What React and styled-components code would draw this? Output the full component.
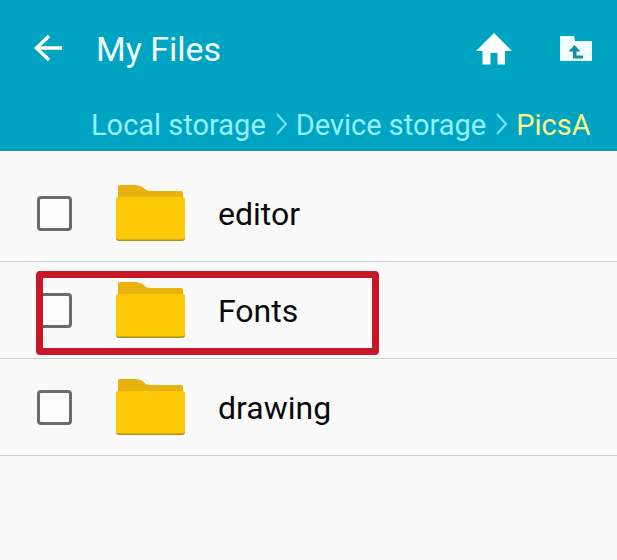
import React from "react";
import styled, { createGlobalStyle } from "styled-components";

const GlobalStyle = createGlobalStyle`
  *, *::before, *::after { box-sizing: border-box; }
  html, body { margin: 0; min-height: 100%; background: #fafafa; }
  body { font-family: Roboto, "Noto Sans", sans-serif; color: #0a0a0a; }
  svg { flex: none; }
`;

const Header = styled.header`
  background: #00a4c3;
  padding-bottom: 8px;
  border-bottom: 1px solid #0f9bb5;
`;

const Toolbar = styled.div`
  display: flex;
  align-items: center;
  height: 98px;
  padding: 0 24px 0 33px;
`;

const IconButton = styled.button`
  display: flex;
  flex: none;
  padding: 0;
  border: 0;
  background: none;
  color: ${(p) => p.$color || "#fbffff"};
  cursor: pointer;
`;

const Title = styled.h1`
  flex: 1;
  margin: 0 0 0 33px;
  font-size: 34px;
  line-height: 40px;
  font-weight: 400;
  color: #f4feff;
`;

const Actions = styled.div`
  display: flex;
  align-items: center;
  gap: 48px;
`;

const Breadcrumbs = styled.nav`
  display: flex;
  align-items: center;
  height: 44px;
  gap: 8px;
  margin: 0 27px 0 91px;
  padding-top: 10px;
  overflow: hidden;
  white-space: nowrap;
`;

const Crumb = styled.a`
  flex: none;
  font-size: 29px;
  line-height: 34px;
  color: ${(p) => (p.$current ? "#fbf58c" : "#94f0fb")};
  text-decoration: none;
`;

const FileList = styled.ul`
  margin: 0;
  padding: 14px 0 0;
  list-style: none;
`;

const FileRow = styled.li`
  position: relative;
  height: 97px;
  border-bottom: 1px solid #cfcfcf;
`;

const FileLabel = styled.label`
  display: flex;
  align-items: center;
  height: 100%;
  padding-left: 37px;
`;

const Checkbox = styled.input`
  appearance: none;
  flex: none;
  width: 35px;
  height: 35px;
  margin: 0 43px 0 0;
  border: 3px solid #6b6b6b;
  border-radius: 4px;
  background: #fcfcfc;
  &:checked { background: #00a4c3; }
`;

const FileName = styled.span`
  margin-left: 32px;
  padding-top: 2px;
  font-size: 32px;
  line-height: 38px;
`;

const Highlight = styled.div`
  position: absolute;
  top: 9px;
  left: 36px;
  width: 343px;
  height: 84px;
  border: 7px solid #c81828;
  border-radius: 4px;
  pointer-events: none;
`;

const BackIcon = () => (
  <svg width="30" height="30" viewBox="0 0 30 30" fill="none" stroke="currentColor" strokeWidth="3.500" aria-hidden="true">
    <path d="M29 14H4M16 2L3.500 14L16 26" />
  </svg>
);

const HomeIcon = () => (
  <svg width="36" height="32" viewBox="0 0 36 32" fill="currentColor" aria-hidden="true">
    <path d="M18 0L36 18H29V31.500H21.500V20H14.500V31.500H6.500V18H0Z" />
  </svg>
);

const FolderUpIcon = () => (
  <svg width="33" height="27" viewBox="0 0 33 27" aria-hidden="true">
    <path fill="currentColor" d="M0 0H14L15 5H32V25H0Z" />
    <path fill="#168da7" d="M14.500 9L20.500 15.500H16.500V19.500H23V22.500H13V15.500H8.500Z" />
  </svg>
);

const Chevron = () => (
  <svg width="14" height="24" viewBox="0 0 14 24" fill="none" stroke="#78dcec" strokeWidth="2.200" aria-hidden="true">
    <path d="M3 1L12 11L3 21" />
  </svg>
);

const FolderIcon = () => (
  <svg width="71" height="58" viewBox="0 0 71 58" aria-hidden="true">
    <path fill="#e8b30f" d="M3 14V3Q3 1 5 1H21Q25 1 28 3.500L31 6Q33 7 36 7H66Q68 7 68 9V14Z" />
    <path fill="#aa9419" d="M1 16H70V54Q70 57 67 57H4Q1 57 1 54Z" />
    <path fill="#fdc907" d="M1 15Q1 13 3 13H68Q70 13 70 15V53Q70 55.500 67 55.500H4Q1 55.500 1 53Z" />
  </svg>
);

const files = [{ name: "editor" }, { name: "Fonts", highlighted: true }, { name: "drawing" }];

export default function App() {
  return (
    <>
      <GlobalStyle />
      <Header>
        <Toolbar>
          <IconButton type="button" aria-label="Back">
            <BackIcon />
          </IconButton>
          <Title>My Files</Title>
          <Actions>
            <IconButton type="button" aria-label="Home">
              <HomeIcon />
            </IconButton>
            <IconButton type="button" aria-label="Up one folder" $color="#f0fdff">
              <FolderUpIcon />
            </IconButton>
          </Actions>
        </Toolbar>
        <Breadcrumbs aria-label="Folder path">
          <Crumb href="#local">Local storage</Crumb>
          <Chevron />
          <Crumb href="#device">Device storage</Crumb>
          <Chevron />
          <Crumb href="#pics" $current aria-current="page">PicsA</Crumb>
        </Breadcrumbs>
      </Header>
      <main>
        <FileList>
          {files.map((file) => (
            <FileRow key={file.name}>
              <FileLabel>
                <Checkbox type="checkbox" />
                <FolderIcon />
                <FileName>{file.name}</FileName>
              </FileLabel>
              {file.highlighted && <Highlight />}
            </FileRow>
          ))}
        </FileList>
      </main>
    </>
  );
}
